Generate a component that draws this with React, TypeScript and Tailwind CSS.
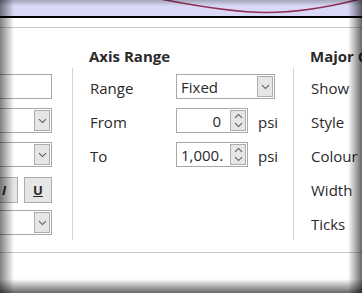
const Chevron = ({ up = false }: { up?: boolean }) => (
  <svg width="9" height="6" viewBox="0 0 9 6" className={up ? "rotate-180" : ""}>
    <path d="M1 1.2 L4.5 4.6 L8 1.2" fill="none" stroke="#5a5a5a" strokeWidth="1.1" />
  </svg>
);

function Select({ value = "", className = "" }: { value?: string; className?: string }) {
  return (
    <div className={`flex h-[25px] items-center border border-[#a8a8a8] bg-white ${className}`}>
      <span className="flex-1 truncate pl-[4px] pt-[1px]">{value}</span>
      <div className="m-[1px] flex h-[21px] w-[16px] items-center justify-center border border-[#adadad] bg-[#e6e6e6]">
        <Chevron />
      </div>
    </div>
  );
}

function Spin({ value, right = false }: { value: string; right?: boolean }) {
  return (
    <div className="flex h-[25px] w-[72px] items-center border border-[#a8a8a8] bg-white">
      <span className={`flex-1 overflow-hidden whitespace-nowrap pt-[1px] ${right ? "pr-[8px] text-right" : "pl-[4px]"}`}>
        {value}
      </span>
      <div className="m-[1px] flex h-[21px] w-[16px] flex-col items-center justify-center gap-[3px] border border-[#adadad] bg-[#e6e6e6]">
        <Chevron up />
        <Chevron />
      </div>
    </div>
  );
}

const rows = "flex flex-col gap-[9px] pt-[6px] pb-[5px]";

export default function App() {
  return (
    <div className="relative h-[293px] w-[362px] overflow-hidden bg-white font-['Open_Sans',sans-serif] text-[15px] leading-[20px] text-[#2a2a2a]">
      {/* plot strip */}
      <div className="h-[16px] bg-[#d9d9f7]">
        <svg width="362" height="16" viewBox="0 0 362 16">
          <path d="M150 -3 C195 6 235 12.5 266 12.5 C300 12.5 335 6 368 -3" fill="none" stroke="#8e2f55" strokeWidth="1.5" />
        </svg>
      </div>
      <div className="h-[12px] border-t-2 border-b border-t-black border-b-[#c8c8c8]" />

      <div className="flex">
        {/* left (cut off) */}
        <div className="w-[72px] shrink-0 pt-[18px]">
          <div className="h-[20px]" />
          <div className={`${rows} mt-[2px] ml-[-100px] w-[152px]`}>
            <div className="h-[25px] border border-[#a8a8a8]" />
            <Select />
            <Select />
            <div className="flex h-[25px] justify-end gap-[6px] pt-[1px]">
              <div className="flex h-[26px] w-[28px] items-center justify-center border border-[#adadad] bg-[#e6e6e6] text-[13px] font-bold italic">
                I
              </div>
              <div className="flex h-[26px] w-[28px] items-center justify-center border border-[#adadad] bg-[#e6e6e6] text-[13px] font-bold underline">
                U
              </div>
            </div>
            <Select />
          </div>
        </div>

        {/* axis range */}
        <div className="w-[221px] shrink-0 pt-[18px]">
          <div className="h-[20px] pl-[17px] font-bold">Axis Range</div>
          <div className={`${rows} mt-[2px] border-l border-[#d4d4d4] pl-[17px]`}>
            <div className="flex h-[25px] items-center">
              <span className="w-[86px] pt-[2px]">Range</span>
              <Select value="Fixed" className="w-[99px]" />
            </div>
            <div className="flex h-[25px] items-center">
              <span className="w-[86px] pt-[2px]">From</span>
              <Spin value="0" right />
              <span className="ml-[10px] pt-[2px]">psi</span>
            </div>
            <div className="flex h-[25px] items-center">
              <span className="w-[86px] pt-[2px]">To</span>
              <Spin value="1,000." />
              <span className="ml-[10px] pt-[2px]">psi</span>
            </div>
            <div className="h-[25px]" />
            <div className="h-[25px]" />
          </div>
        </div>

        {/* major gridlines */}
        <div className="w-[200px] shrink-0 pt-[18px]">
          <div className="h-[20px] whitespace-nowrap pl-[17px] font-bold">Major Gridlines</div>
          <div className={`${rows} mt-[2px] border-l border-[#d4d4d4] pl-[17px]`}>
            {["Show", "Style", "Colour", "Width", "Ticks"].map((l) => (
              <div key={l} className="flex h-[25px] items-center pt-[2px]">
                {l}
              </div>
            ))}
          </div>
        </div>
      </div>

      <div className="mt-[12px] border-t border-[#c8c8c8]" />

      {/* vignette */}
      <div className="pointer-events-none absolute inset-x-0 top-0 h-[6px] bg-linear-to-b from-black/25 to-transparent" />
      <div className="pointer-events-none absolute inset-y-0 left-0 w-[14px] bg-linear-to-r from-black/50 to-transparent" />
      <div className="pointer-events-none absolute inset-y-0 right-0 w-[14px] bg-linear-to-l from-black/60 to-transparent" />
      <div className="pointer-events-none absolute inset-x-0 bottom-0 h-[14px] bg-linear-to-t from-black/60 to-transparent" />
    </div>
  );
}
